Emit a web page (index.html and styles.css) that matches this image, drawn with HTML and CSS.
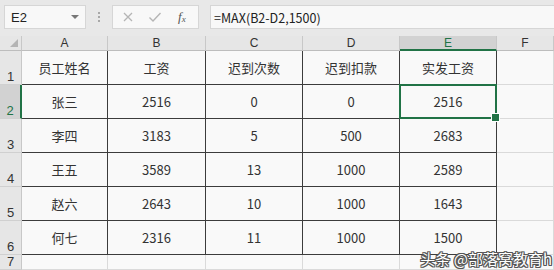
FILE: index.html
```html
<!DOCTYPE html>
<html lang="zh-CN">
<head>
<meta charset="utf-8">
<title>Excel - 实发工资</title>
<link rel="stylesheet" href="styles.css">
</head>
<body>
<div class="app">
  <div class="toolbar">
    <div class="namebox"><span>E2</span><span class="caret"></span></div>
    <div class="dots"><i></i><i></i><i></i></div>
    <div class="btnbox">
      <svg class="ico" width="12" height="12" viewBox="0 0 12 12"><path d="M2 2L10 10M10 2L2 10" stroke="#b5b5b5" stroke-width="1.3" fill="none"/></svg>
      <svg class="ico" width="14" height="12" viewBox="0 0 14 12"><path d="M1.5 6.5L5 10L12.5 2" stroke="#b5b5b5" stroke-width="1.4" fill="none"/></svg>
      <span class="fx">f<sub>x</sub></span>
    </div>
    <div class="formula">=MAX(B2-D2,1500)</div>
  </div>
  <div class="sheet">
    <div class="corner"><span class="tri"></span></div>
    <div class="ch">A</div><div class="ch">B</div><div class="ch">C</div><div class="ch">D</div><div class="ch sel-h">E</div><div class="ch">F</div>

    <div class="rh">1</div>
    <div class="c t">员工姓名</div><div class="c t">工资</div><div class="c t">迟到次数</div><div class="c t">迟到扣款</div><div class="c t">实发工资</div><div class="c"></div>

    <div class="rh sel-r">2</div>
    <div class="c t">张三</div><div class="c t">2516</div><div class="c t">0</div><div class="c t">0</div><div class="c t sel">2516</div><div class="c"></div>

    <div class="rh">3</div>
    <div class="c t">李四</div><div class="c t">3183</div><div class="c t">5</div><div class="c t">500</div><div class="c t">2683</div><div class="c"></div>

    <div class="rh">4</div>
    <div class="c t">王五</div><div class="c t">3589</div><div class="c t">13</div><div class="c t">1000</div><div class="c t">2589</div><div class="c"></div>

    <div class="rh">5</div>
    <div class="c t">赵六</div><div class="c t">2643</div><div class="c t">10</div><div class="c t">1000</div><div class="c t">1643</div><div class="c"></div>

    <div class="rh">6</div>
    <div class="c t">何七</div><div class="c t">2316</div><div class="c t">11</div><div class="c t">1000</div><div class="c t">1500</div><div class="c"></div>

    <div class="rh">7</div>
    <div class="c"></div><div class="c"></div><div class="c"></div><div class="c"></div><div class="c"></div><div class="c"></div>
  </div>
  <div class="watermark">头条 @部落窝教育h</div>
</div>
</body>
</html>
```
FILE: styles.css
```css
* { box-sizing: border-box; }
html, body { margin: 0; padding: 0; }
body {
  width: 554px;
  height: 270px;
  overflow: hidden;
  background: #f7f7f7;
  font-family: "Noto Sans CJK SC", "Noto Sans", sans-serif;
  color: #333;
}
.app {
  position: relative;
  width: 554px;
  height: 270px;
  display: flex;
  flex-direction: column;
}
.toolbar {
  height: 36px;
  flex: none;
  background: #e8e8e8;
  display: flex;
  align-items: flex-start;
  padding: 5px 0 0 4px;
}
.namebox {
  width: 82px;
  height: 24px;
  background: #f8f8f8;
  border: 1px solid #d6d6d6;
  display: flex;
  align-items: center;
  justify-content: space-between;
  padding: 0 5px 0 6px;
  font-family: "Liberation Sans", "Noto Sans", sans-serif;
  font-size: 13px;
  color: #222;
}
.caret {
  width: 0;
  height: 0;
  border-left: 4px solid transparent;
  border-right: 4px solid transparent;
  border-top: 4px solid #777;
  margin-right: 1px;
}
.dots {
  width: 26px;
  height: 24px;
  display: flex;
  flex-direction: column;
  align-items: center;
  justify-content: center;
  gap: 2px;
}
.dots i {
  display: block;
  width: 2px;
  height: 2px;
  background: #a8a8a8;
}
.btnbox {
  width: 87px;
  height: 24px;
  background: #f8f8f8;
  border: 1px solid #d6d6d6;
  display: flex;
  align-items: center;
  padding: 0 0 0 9px;
  gap: 14px;
}
.ico { display: block; }
.fx {
  font-family: "Liberation Serif", "DejaVu Serif", serif;
  font-style: italic;
  font-size: 13px;
  color: #555;
  margin-left: 2px;
}
.fx sub { font-size: 9px; vertical-align: -1px; }
.formula {
  flex: 1;
  height: 24px;
  margin-left: 11px;
  margin-right: -2px;
  background: #f8f8f8;
  border: 1px solid #d6d6d6;
  padding: 0 0 0 3px;
  display: flex;
  align-items: center;
  font-family: "Noto Sans CJK SC", "Noto Sans", sans-serif;
  font-size: 12.5px;
  color: #222;
}
.sheet {
  flex: 1;
  display: grid;
  grid-template-columns: 22px 86px 98px 97px 97px 97px 1fr;
  grid-template-rows: 15px repeat(6, 34px) 1fr;
  background: #f9f9f9;
}
.corner {
  position: relative;
  background: #e6e6e6;
  border-right: 1px solid #c8c8c8;
  border-bottom: 1px solid #bdbdbd;
}
.tri {
  position: absolute;
  right: 3px;
  bottom: 3px;
  width: 0;
  height: 0;
  border-left: 8px solid transparent;
  border-bottom: 8px solid #b4b4b4;
}
.ch {
  background: #e6e6e6;
  border-right: 1px solid #c8c8c8;
  border-bottom: 1px solid #bdbdbd;
  font-family: "Liberation Sans", "Noto Sans", sans-serif;
  font-size: 12px;
  color: #333;
  display: flex;
  align-items: center;
  justify-content: center;
  line-height: 1;
}
.ch.sel-h {
  background: #d2d2d2;
  color: #217346;
  border-bottom: 2px solid #217346;
}
.rh {
  background: #e6e6e6;
  border-right: 1px solid #c8c8c8;
  border-bottom: 1px solid #d0d0d0;
  font-family: "Liberation Sans", "Noto Sans", sans-serif;
  font-size: 13px;
  color: #333;
  display: flex;
  align-items: flex-end;
  justify-content: center;
  padding-bottom: 1px;
  line-height: 1;
}
.rh.sel-r {
  background: #d2d2d2;
  color: #217346;
  border-right: 2px solid #217346;
}
.c {
  border-right: 1px solid #dadada;
  border-bottom: 1px solid #dadada;
  display: flex;
  align-items: center;
  justify-content: center;
  font-size: 13px;
  color: #333;
}
.c.t {
  border-right-color: #3c3c3c;
  border-bottom-color: #3c3c3c;
}
.c.sel {
  position: relative;
  z-index: 2;
}
.c.sel::after {
  content: "";
  position: absolute;
  top: -1px;
  left: -1px;
  right: -1px;
  bottom: -1px;
  border: 2px solid #217346;
}
.c.sel::before {
  content: "";
  position: absolute;
  right: -4px;
  bottom: -4px;
  width: 7px;
  height: 7px;
  background: #217346;
  border: 1px solid #fff;
  z-index: 3;
}
.watermark {
  position: absolute;
  right: 2px;
  bottom: 4px;
  font-size: 15px;
  line-height: 1;
  color: #fff;
  white-space: nowrap;
  text-shadow:
    1px 0 0 #555, -1px 0 0 #555, 0 1px 0 #555, 0 -1px 0 #555,
    1px 1px 0 #555, -1px -1px 0 #555, 1px -1px 0 #555, -1px 1px 0 #555;
}
```
